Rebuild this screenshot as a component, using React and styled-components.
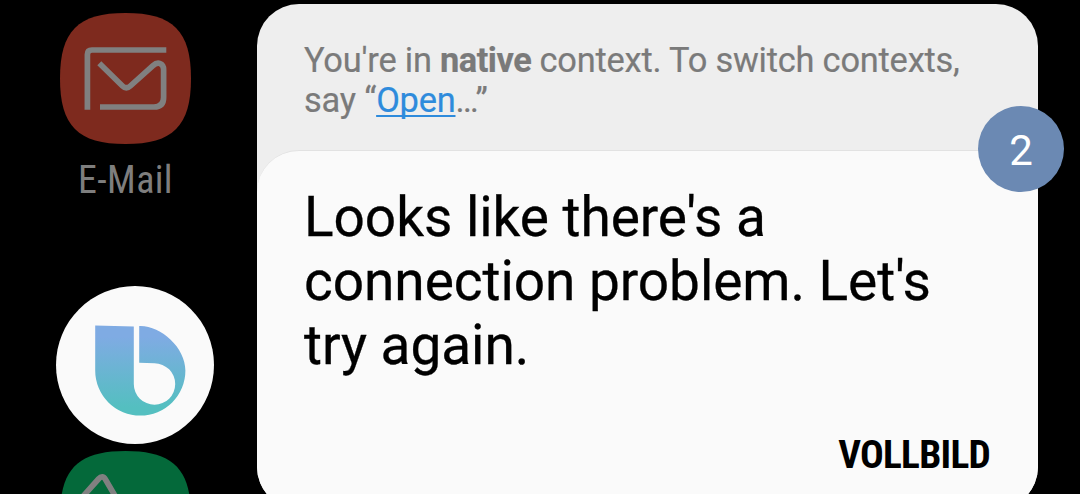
import styled, { createGlobalStyle } from "styled-components";

const GlobalStyle = createGlobalStyle`
    body{
        margin: 0;
        background: #000;
        font-family: Roboto, "Liberation Sans", sans-serif;
    }
`

const SQUIRCLE = "M0 65.5C0 18 18 0 65.5 0S131 18 131 65.5S113 131 65.5 131S0 113 0 65.5Z"

function App(){
    return (
        <Screen>
            <GlobalStyle/>
            <Launcher>
                <AppShortcut>
                    <MailIcon/>
                    <AppName>E-Mail</AppName>
                </AppShortcut>
                <BixbyButton aria-label="Bixby">
                    <BixbyLogo/>
                </BixbyButton>
                <PhoneIcon/>
            </Launcher>
            <Panel>
                <Hint>
                    You're in <b>native</b> context. To switch contexts,<br/>
                    say “<HintLink href="#open">Open</HintLink>…”
                </Hint>
                <Card>
                    <Message>
                        Looks like there's a<br/>
                        connection problem. Let's<br/>
                        try again.
                    </Message>
                    <FullScreenButton>VOLLBILD</FullScreenButton>
                </Card>
                <Counter>2</Counter>
            </Panel>
        </Screen>
    )
}

function MailIcon(){
    return (
        <AppIcon viewBox="0 0 131 131">
            <path d={SQUIRCLE} fill="#7e2a1e"/>
            <g fill="none" stroke="#808080" strokeWidth="5.7">
                <path d="M27.4 96.7V41.5Q27.4 37 31.9 37H106.3"/>
                <path d="M39.3 50.3L62.5 73Q66.3 76.7 70.3 73L93 52.6C98 48 103.6 50.5 103.6 56.5V84.5Q103.6 94 94 94H40"/>
            </g>
        </AppIcon>
    )
}

function PhoneIcon(){
    return (
        <AppIcon viewBox="0 0 131 131">
            <path d={SQUIRCLE} fill="#04693a"/>
            <path d="M22 46.5L38.5 28Q42.5 23.5 45.5 28.5L56 46.5" fill="none" stroke="#808080" strokeWidth="5.7"/>
        </AppIcon>
    )
}

function BixbyLogo(){
    return (
        <Logo viewBox="0 0 158 158">
            <defs>
                <linearGradient id="bixby" x1="0" y1="40" x2="0" y2="130" gradientUnits="userSpaceOnUse">
                    <stop offset="0.12" stopColor="#7fabe3"/>
                    <stop offset="0.9" stopColor="#54bfc0"/>
                </linearGradient>
            </defs>
            <path
                d="M39.2 39.6L77.8 40.6V98A20.7 20.7 0 1 0 98.5 77.3L83.2 76.7V40C104 39 129.4 61 129.4 84.5A45.1 45.1 0 0 1 39.2 84.5Z"
                fill="url(#bixby)"
            />
        </Logo>
    )
}

const Screen = styled.main`
    display: flex;
    width: 1080px;
    height: 494px;
    overflow: hidden;
    background: #000;
`

const Launcher = styled.nav`
    display: flex;
    flex-direction: column;
    flex: none;
    width: 257px;
    padding-top: 13px;
    box-sizing: border-box;
`

const AppIcon = styled.svg`
    display: block;
    flex: none;
    width: 131px;
    height: 131px;
    margin-left: 60px;
`

const AppShortcut = styled.div`
    height: 273px;
    flex: none;
`

const AppName = styled.div`
    width: 131px;
    margin: 14px 0 0 60px;
    color: #7e7e7e;
    font-family: "Roboto Condensed", Roboto, sans-serif;
    font-size: 38px;
    font-stretch: 75%;
    letter-spacing: 0.35px;
    line-height: 45px;
    text-align: center;
`

const BixbyButton = styled.button`
    flex: none;
    width: 158px;
    height: 158px;
    margin: 0 0 7px 56px;
    padding: 0;
    border: 0;
    border-radius: 50%;
    background: #fafafa;
`

const Logo = styled.svg`
    display: block;
    width: 158px;
    height: 158px;
`

const Panel = styled.section`
    position: relative;
    display: flex;
    flex-direction: column;
    flex: none;
    width: 781px;
    height: 505px;
    margin-top: 4px;
    border-radius: 42px;
    background: #eee;
`

const Hint = styled.p`
    margin: 0;
    height: 146px;
    padding: 36px 0 0 47px;
    box-sizing: border-box;
    color: #7a7a7a;
    font-size: 34.4px;
    line-height: 40px;
    letter-spacing: -0.21px;
    white-space: nowrap;
    -webkit-text-stroke: 0.2px;

    b{
        letter-spacing: -0.5px;
    }
`

const HintLink = styled.a`
    color: #2e8bdc;
    text-decoration: underline;
    text-decoration-thickness: 2px;
    text-underline-offset: 3px;
    text-decoration-skip-ink: none;
`

const Card = styled.div`
    display: flex;
    flex: 1;
    flex-direction: column;
    justify-content: space-between;
    padding: 34px 48px 31px 47px;
    border-top: 1px solid #e2e2e2;
    border-radius: 42px;
    background: #fafafa;
`

const Message = styled.p`
    margin: 0;
    color: #000;
    font-size: 55px;
    line-height: 64px;
    letter-spacing: -0.06px;
    white-space: nowrap;
    -webkit-text-stroke: 0.3px #000;
`

const FullScreenButton = styled.button`
    align-self: flex-end;
    padding: 0;
    border: 0;
    background: none;
    color: #000;
    font-family: "Roboto Condensed", Roboto, sans-serif;
    font-size: 39.4px;
    font-stretch: 75%;
    font-weight: 700;
    letter-spacing: -0.75px;
    line-height: 46px;
`

/* step count sitting on the right edge of the panel */
const Counter = styled.span`
    position: absolute;
    top: 102px;
    right: -26px;
    width: 86px;
    height: 86px;
    border-radius: 50%;
    background: #6b89b3;
    color: #fff;
    font-size: 42px;
    line-height: 90px;
    text-align: center;
`

export default App;
